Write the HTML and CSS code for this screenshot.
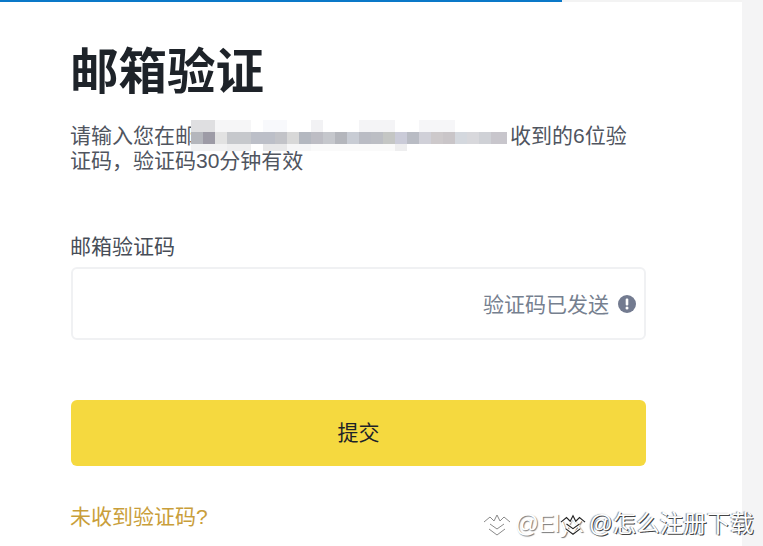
FILE: index.html
```html
<!DOCTYPE html>
<html lang="zh-CN">
<head>
  <meta charset="UTF-8" />
  <title>邮箱验证</title>
  <link rel="stylesheet" href="styles.css">
</head>
<body>

<div class="page">
  <div class="progress"><div class="progress-bar"></div></div>

  <div class="container">
    <h1>邮箱验证</h1>
    <p class="desc">请输入您在邮<span class="masked"><span class="mosaic"></span></span>收到的6位验证码，验证码30分钟有效</p>

    <label class="field-label">邮箱验证码</label>
    <div class="field">
      <span class="field-hint">验证码已发送</span>
      <svg class="hint-icon" width="18" height="18" viewBox="0 0 18 18">
        <circle cx="9" cy="9" r="9" fill="#737b90"/>
        <rect x="7.7" y="3.6" width="2.6" height="6.8" rx="1" fill="#fff"/>
        <circle cx="9" cy="13" r="1.5" fill="#fff"/>
      </svg>
    </div>

    <button class="submit">提交</button>

    <a class="resend">未收到验证码?</a>
  </div>
</div>
<div class="gutter"></div>

<!-- watermark over the page -->
<div class="wm wm-one">
  <svg class="wm-icon" width="28" height="24" viewBox="0 0 28 24">
    <path d="M1 10l6-5 4 4 3-6 3 6 4-4 6 5M7 12l7 5 7-5M6 17l8 6 8-6" fill="none" stroke="#8a8a8a" stroke-width="1"/>
  </svg>
  <span>@Elyx</span>
</div>
<div class="wm wm-two">
  <svg class="wm-icon" width="26" height="24" viewBox="0 0 28 24">
    <path d="M1 10l6-5 4 4 3-6 3 6 4-4 6 5M7 12l7 5 7-5M6 17l8 6 8-6" fill="none" stroke="#fff" stroke-width="3"/>
    <path d="M1 10l6-5 4 4 3-6 3 6 4-4 6 5M7 12l7 5 7-5M6 17l8 6 8-6" fill="none" stroke="#222" stroke-width="1.2"/>
  </svg>
  <span>@怎么注册下载</span>
</div>

</body>
</html>
```

FILE: styles.css
```css
html, body {
  margin: 0;
  height: 546px;
  overflow: hidden;
}
body {
  display: flex;
  background: #fff;
  font-family: "Liberation Sans", "Noto Sans CJK SC", sans-serif;
  color: #1e2329;
}
.page {
  width: 742px;
  flex: none;
}
.gutter {
  flex: 1;
  background: #f4f4f5;
}
.progress {
  height: 2px;
  background: #f3f3f3;
}
.progress-bar {
  width: 562px;
  height: 2px;
  background: #0a78c8;
}
.container {
  width: 575px;
  padding: 40px 0 0 71px;
}
h1 {
  margin: 0 0 0 -1px;
  font-size: 48.5px;
  line-height: 60px;
  font-weight: 700;
}
.desc {
  margin: 21px 0 0 -1px;
  width: 560px;
  font-size: 21px;
  line-height: 25px;
  color: #50555f;
}
.masked {
  position: relative;
  display: inline-block;
  width: 314px;
  height: 25px;
  vertical-align: top;
}
/* 12px blocks, same as the blur in the shot */
.mosaic {
  position: absolute;
  left: -5px;
  top: -3px;
  width: 316px;
  height: 31px;
  background:
    linear-gradient(90deg, #b4b6bc 0 12px, #9d9ba6 12px 24px, #e2e2e2 24px 36px, #c6c8cc 36px 60px, #bcbfc8 60px 84px, #c2c3c8 84px 96px, #d8d8d8 96px 108px, #b4b8c0 108px 120px, #bdbdc4 120px 132px, #c5c7cc 132px 144px, #b4b6bc 144px 156px, #c8ccd4 156px 168px, #babcc4 168px 180px, #bcbec4 180px 192px, #c4c6c4 192px 204px, #cacbd8 204px 216px, #b9bcc4 216px 228px, #d0d0d8 228px 240px, #cdc9cb 240px 252px, #c9c5c8 252px 264px, #d4d8de 264px 276px, #d8d8dc 276px 288px, #cfd1d6 288px 300px, #c8c6cc 300px 316px) 0 12px / 316px 12px no-repeat,
    linear-gradient(90deg, #dfdfe1 0 24px, #f6f6f7 24px 60px, #fff 60px 72px, #f8f9fc 72px 96px, #fff 96px 120px, #f2f2f4 120px 132px, #fff 132px 168px, #f4f4f6 168px 204px, #fff 204px 228px, #f6f6f8 228px 264px, #fff 264px) 0 0 / 316px 12px no-repeat,
    linear-gradient(90deg, #f2f2f3 0 36px, #eeeeef 36px 60px, #fff 60px 72px, #e8e8e9 72px 96px, #f6f6f7 96px 120px, #fafafa 120px 204px, #eeeeef 204px 216px, #fff 216px) 0 24px / 316px 7px no-repeat;
}
.field-label {
  display: block;
  margin: 61px 0 0 -1px;
  font-size: 21px;
  line-height: 25px;
  color: #474d57;
}
.field {
  display: flex;
  align-items: center;
  justify-content: flex-end;
  gap: 9px;
  box-sizing: border-box;
  height: 73px;
  margin-top: 8px;
  padding-right: 8px;
  border: 2px solid #f0f1f3;
  border-radius: 6px;
}
.field-hint {
  font-size: 21px;
  color: #76808f;
  padding-bottom: 2px;
}
.submit {
  display: block;
  width: 100%;
  height: 66px;
  margin-top: 60px;
  padding: 0 0 4px;
  border: none;
  border-radius: 6px;
  background: #f5d93f;
  font-family: inherit;
  font-size: 21px;
  color: #1e2329;
}
.resend {
  display: block;
  margin: 38px 0 0 -1px;
  font-size: 21px;
  line-height: 25px;
  color: #c99e3a;
}
.wm {
  position: absolute;
  top: 510px;
  display: flex;
  align-items: center;
  font-size: 23.5px;
  line-height: 28px;
  color: #fff;
  white-space: nowrap;
}
.wm-one {
  left: 483px;
  gap: 4px;
  text-shadow: 1px 1px 1px #777;
}
.wm-two {
  left: 560px;
  gap: 3px;
  text-shadow: 1px 1px 0 #444, -1px 0 1px #888;
}
```
